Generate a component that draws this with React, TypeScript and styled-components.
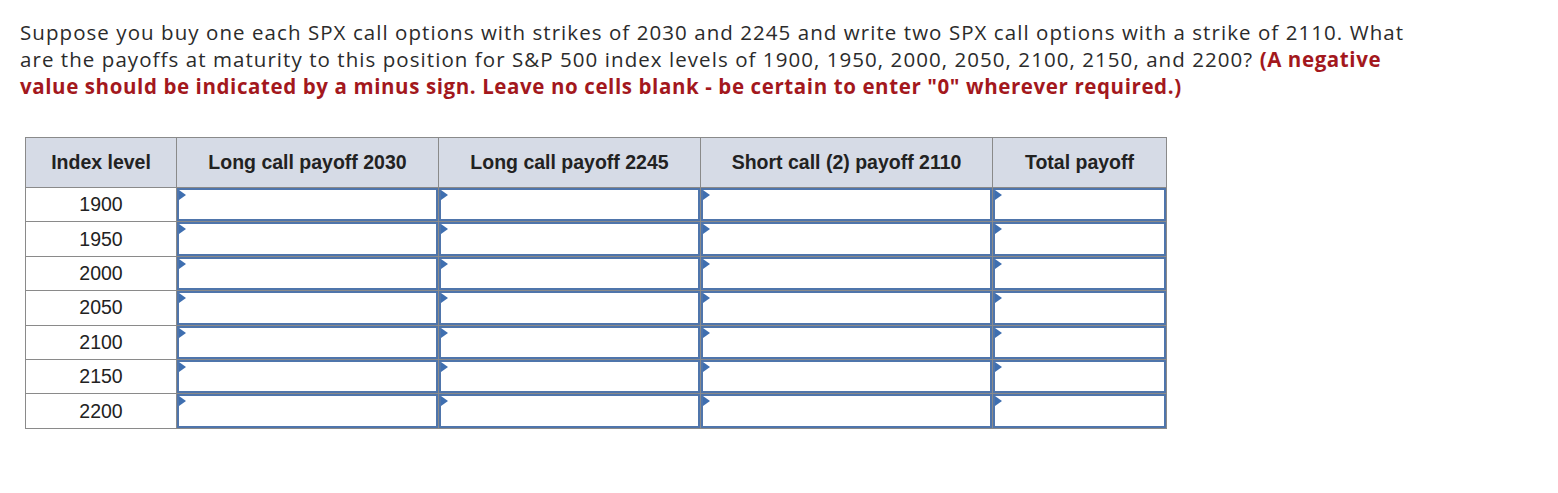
import styled, { createGlobalStyle } from "styled-components"

const GlobalStyle = createGlobalStyle`
  body {
    margin: 0;
    background: #fff;
  }
`

const columns = [
  { title: "Index level", width: 151 },
  { title: "Long call payoff 2030", width: 262 },
  { title: "Long call payoff 2245", width: 262 },
  { title: "Short call (2) payoff 2110", width: 292 },
  { title: "Total payoff", width: 174 },
]

const levels = ["1900", "1950", "2000", "2050", "2100", "2150", "2200"]

const App = () => {
  return <Page>
    <GlobalStyle />
    <Question>
      Suppose you buy one each SPX call options with strikes of 2030 and 2245 and write two SPX call options with a strike of 2110. What
      are the payoffs at maturity to this position for S&amp;P 500 index levels of 1900, 1950, 2000, 2050, 2100, 2150, and 2200?{" "}
      <Note>(A negative value should be indicated by a minus sign. Leave no cells blank - be certain to enter "0" wherever required.)</Note>
    </Question>
    <Table>
      <colgroup>
        {columns.map(c => <col key={c.title} style={{ width: c.width }} />)}
      </colgroup>
      <thead>
        <tr>
          {columns.map(c => <HeadCell key={c.title}>{c.title}</HeadCell>)}
        </tr>
      </thead>
      <tbody>
        {levels.map(level => <tr key={level}>
          <LevelCell>{level}</LevelCell>
          {columns.slice(1).map(c => <InputCell key={c.title}>
            <AnswerBox type="text" aria-label={`${c.title} at ${level}`} />
            <Marker />
          </InputCell>)}
        </tr>)}
      </tbody>
    </Table>
  </Page>
}

const Page = styled.div`
  padding: 19px 20px 20px 20px;
  font-family: "Open Sans", "Liberation Sans", sans-serif;
`

const Question = styled.p`
  margin: 0;
  width: 1400px;
  font-size: 20.5px;
  line-height: 27px;
  color: #2b2b2b;
  letter-spacing: 1.06px;
`

const Note = styled.span`
  color: #a3181d;
  font-weight: 700;
  letter-spacing: 0.6px;
`

const Table = styled.table`
  margin: 37px 0 0 5px;
  border-collapse: collapse;
  table-layout: fixed;
  width: 1141px;
  font-family: "Liberation Sans", Arial, sans-serif;
  color: #222;
`

const HeadCell = styled.th`
  height: 49px;
  padding: 0;
  background: #d6dbe6;
  border: 1px solid #8a8a8a;
  font-size: 19.5px;
  font-weight: 700;
  text-align: center;
`

const LevelCell = styled.td`
  height: 33.4px;
  padding: 0;
  border: 1px solid #8a8a8a;
  font-size: 19.5px;
  text-align: center;
`

const InputCell = styled.td`
  position: relative;
  padding: 0;
  border: 1px solid #8a8a8a;
  height: 33.4px;
`

const AnswerBox = styled.input`
  display: block;
  box-sizing: border-box;
  width: 100%;
  height: 33.4px;
  margin: 0;
  border: 2px solid #4f75ab;
  background: #fff;
  outline: none;
  font-size: 16px;
`

const Marker = styled.span`
  position: absolute;
  top: 2px;
  left: 2px;
  width: 0;
  height: 0;
  border-top: 5px solid transparent;
  border-bottom: 5px solid transparent;
  border-left: 7px solid #3f6fb0;
`

export default App
